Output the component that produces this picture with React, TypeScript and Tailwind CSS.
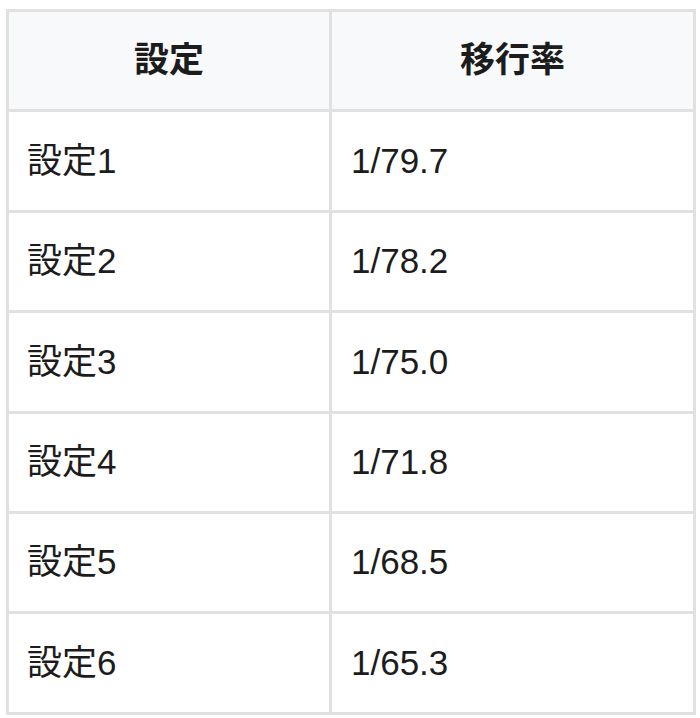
const rows = [
  { setting: "設定1", rate: "1/79.7" },
  { setting: "設定2", rate: "1/78.2" },
  { setting: "設定3", rate: "1/75.0" },
  { setting: "設定4", rate: "1/71.8" },
  { setting: "設定5", rate: "1/68.5" },
  { setting: "設定6", rate: "1/65.3" },
];

const App = () => {
  return (
    <div
      className="min-h-[718px] bg-white pl-[6px] pt-[9px] text-[#1c1c1c]"
      style={{ fontFamily: '"Liberation Sans", "Noto Sans CJK JP", sans-serif' }}
    >
      <div className="grid w-[690px] grid-cols-[320px_361px] auto-rows-[97.4px] gap-[3px] bg-[#e1e1e1] p-[3px] text-[35px]">
        <div className="flex items-center justify-center bg-[#f8f9fa] font-bold">設定</div>
        <div className="flex items-center justify-center bg-[#f8f9fa] font-bold">移行率</div>
        {rows.map((r) => (
          <div key={r.setting} className="contents">
            <div className="flex items-center bg-white pl-[18px]">{r.setting}</div>
            <div className="flex items-center bg-white pl-[19px]">{r.rate}</div>
          </div>
        ))}
      </div>
    </div>
  );
};

export default App;
